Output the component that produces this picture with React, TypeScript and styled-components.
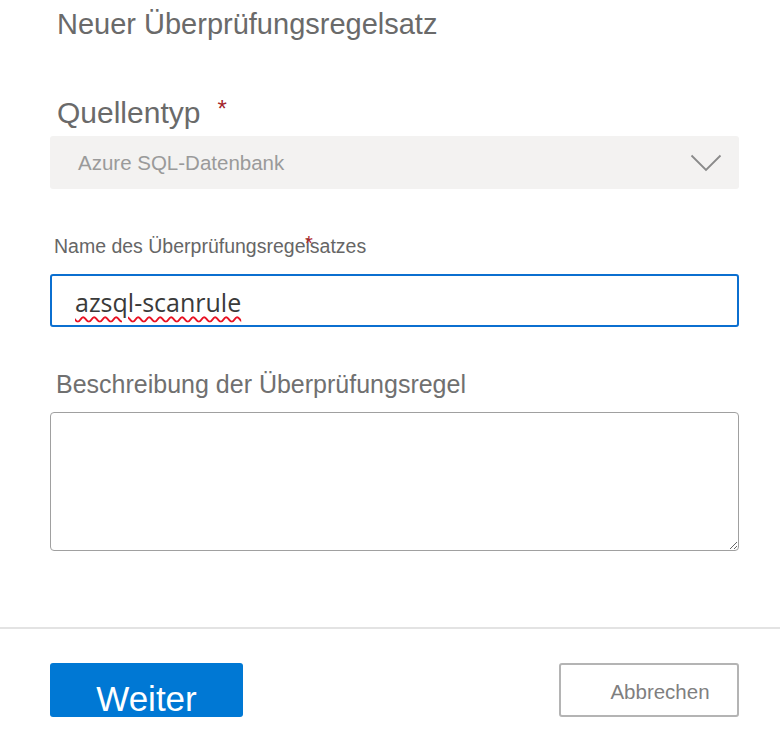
import React from "react";
import styled, { createGlobalStyle } from "styled-components";

const Global = createGlobalStyle`
  html, body { margin: 0; padding: 0; background: #ffffff; }
  body { font-family: "Liberation Sans", Arial, sans-serif; }
  * { box-sizing: border-box; }
`;

const Page = styled.div`
  width: 780px;
  height: 738px;
  display: flex;
  flex-direction: column;
  background: #ffffff;
  overflow: hidden;
`;

const Form = styled.div`
  display: flex;
  flex-direction: column;
  padding: 7px 0 0 50px;
  width: 739px;
`;

const Title = styled.h1`
  margin: 0 0 0 7px;
  font-size: 29px;
  line-height: 34px;
  font-weight: 400;
  color: #6a6a6a;
  white-space: nowrap;
`;

const BigLabel = styled.div`
  margin: 55px 0 6px 7px;
  font-size: 30px;
  line-height: 34px;
  color: #6a6a6a;
  display: flex;
  align-items: flex-start;
  gap: 17px;
`;

const Required = styled.span`
  color: #a4262c;
  font-size: 24px;
  line-height: 24px;
  margin-top: 1px;
`;

const Dropdown = styled.div`
  height: 53px;
  background: #f3f2f1;
  border-radius: 3px;
  display: flex;
  align-items: center;
  justify-content: space-between;
  padding: 0 17px 0 28px;
  color: #9a9a9a;
  font-size: 20.5px;
`;

const SmallLabel = styled.div`
  position: relative;
  margin: 45px 0 16px 4px;
  font-size: 19.5px;
  line-height: 24px;
  color: #666666;
  white-space: nowrap;
`;

const OverStar = styled.span`
  position: absolute;
  left: 251px;
  top: -1px;
  color: #b0262c;
  font-size: 20px;
  line-height: 20px;
`;

const TextInput = styled.div`
  height: 53px;
  border: 2.5px solid #0b6fd0;
  border-radius: 3px;
  display: flex;
  align-items: center;
  padding: 2px 0 0 23px;
  font-family: "Open Sans", "Noto Sans", sans-serif;
  font-size: 25px;
  color: #3a3a3a;
`;

const Misspelled = styled.span`
  text-decoration-line: underline;
  text-decoration-style: wavy;
  text-decoration-color: #e81123;
  text-decoration-thickness: 1.5px;
  text-underline-offset: 4px;
`;

const MidLabel = styled.div`
  margin: 43px 0 13px 6px;
  font-size: 25px;
  line-height: 29px;
  color: #707070;
  white-space: nowrap;
`;

const TextArea = styled.textarea`
  display: block;
  height: 139px;
  width: 100%;
  border: 1.5px solid #a0a0a0;
  border-radius: 4px;
  resize: vertical;
  background: #ffffff;
  font-family: "Liberation Sans", Arial, sans-serif;
  font-size: 18px;
  outline: none;
`;

const Divider = styled.hr`
  margin: 76px 0 0 0;
  border: none;
  height: 2px;
  background: #e3e3e3;
  width: 100%;
`;

const Footer = styled.div`
  display: flex;
  justify-content: space-between;
  padding: 34px 41px 0 50px;
`;

const Button = styled.button<{ $primary?: boolean }>`
  height: 54px;
  width: ${(p) => (p.$primary ? "193px" : "180px")};
  border-radius: 3px;
  font-family: "Liberation Sans", Arial, sans-serif;
  border: ${(p) => (p.$primary ? "none" : "2px solid #b4b4b4")};
  background: ${(p) => (p.$primary ? "#0078d4" : "#ffffff")};
  color: ${(p) => (p.$primary ? "#ffffff" : "#7f7f7f")};
  font-size: ${(p) => (p.$primary ? "35px" : "20.5px")};
  padding: ${(p) => (p.$primary ? "17px 0 0 0" : "4px 0 0 22px")};
  display: flex;
  align-items: center;
  justify-content: center;
  line-height: 1;
`;

const Chevron = () => (
  <svg width="32" height="18" viewBox="0 0 32 18" fill="none">
    <polyline points="1.5,1.5 16,16 30.5,1.5" stroke="#8a8a8a" strokeWidth="1.8" />
  </svg>
);

export default function App() {
  return (
    <Page>
      <Global />
      <Form>
        <Title>Neuer Überprüfungsregelsatz</Title>
        <BigLabel>
          Quellentyp <Required>*</Required>
        </BigLabel>
        <Dropdown>
          <span>Azure SQL-Datenbank</span>
          <Chevron />
        </Dropdown>
        <SmallLabel>
          Name des Überprüfungsregelsatzes
          <OverStar>*</OverStar>
        </SmallLabel>
        <TextInput>
          <Misspelled>azsql-scanrule</Misspelled>
        </TextInput>
        <MidLabel>Beschreibung der Überprüfungsregel</MidLabel>
        <TextArea aria-label="Beschreibung der Überprüfungsregel" />
      </Form>
      <Divider />
      <Footer>
        <Button $primary>Weiter</Button>
        <Button>Abbrechen</Button>
      </Footer>
    </Page>
  );
}
